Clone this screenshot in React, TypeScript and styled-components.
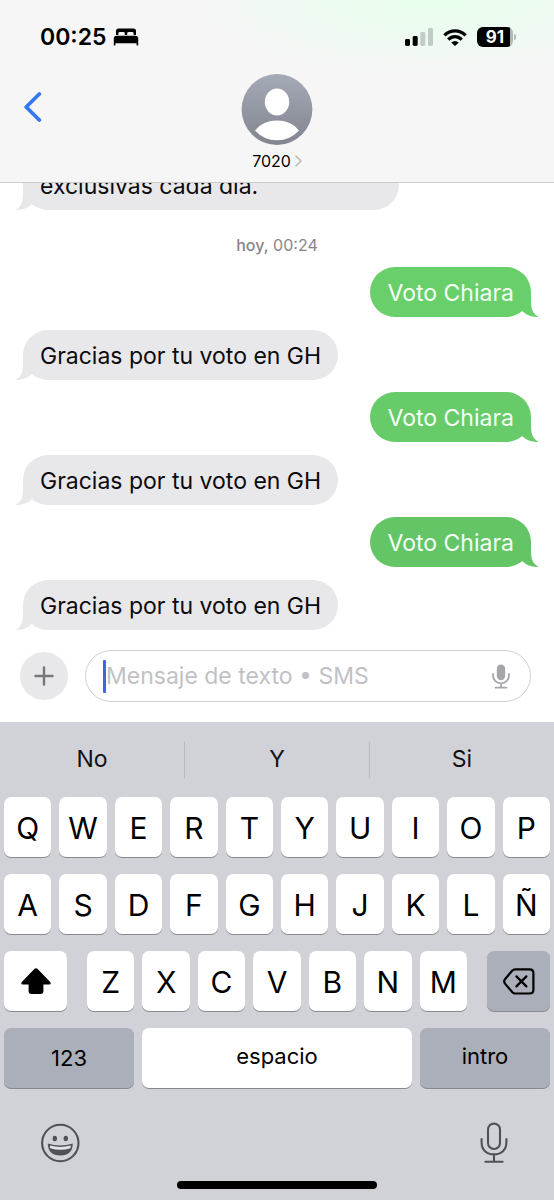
import React from 'react';
import styled, { createGlobalStyle } from 'styled-components';

const GlobalStyle = createGlobalStyle`
  *, *::before, *::after { box-sizing: border-box; }
  html, body { margin: 0; padding: 0; background: #fff; }
  body, button, input { font-family: Inter, "Liberation Sans", sans-serif; }
  button { border: 0; padding: 0; margin: 0; background: none; color: inherit; cursor: pointer; }
  svg { display: block; }
`;

const Screen = styled.div`
  display: flex;
  flex-direction: column;
  height: 100vh;
  min-height: 800px;
  background: #fff;
  color: #0b0b0d;
`;

const Header = styled.header`
  flex: none;
  border-bottom: 1px solid #cbcbcd;
  background:
    radial-gradient(ellipse 240px 74px at 78% 0, #e8feec 0%, #edfbf0 45%, rgba(246, 246, 247, 0) 100%),
    #f6f6f7;
`;

const StatusBar = styled.div`
  display: flex;
  align-items: center;
  justify-content: space-between;
  height: 74px;
  padding: 0 38px 0 40px;
  color: #000;
`;

const StatusGroup = styled.div<{ $gap: number }>`
  display: flex;
  align-items: center;
  gap: ${(p) => p.$gap}px;
`;

const Clock = styled.time`
  font-size: 23px;
  font-weight: 600;
  line-height: 28px;
`;

const Battery = styled.div`
  display: flex;
  align-items: center;
  gap: 1px;
`;

const BatteryBody = styled.span`
  width: 36px;
  height: 20px;
  border-radius: 6px;
  background: linear-gradient(90deg, #000 33px, #b2b8b4 33px);
  color: #fff;
  font-size: 17px;
  font-weight: 700;
  line-height: 20px;
  text-align: center;
`;

const BatteryTip = styled.span`
  width: 2px;
  height: 6px;
  border-radius: 0 2px 2px 0;
  background: #b2b8b4;
`;

const NavBar = styled.nav`
  display: grid;
  grid-template-columns: 1fr auto 1fr;
  height: 108px;
  padding: 0 20px;
`;

const BackButton = styled.button`
  justify-self: start;
  align-self: start;
  padding: 16px 4px;
`;

const Contact = styled.button`
  display: flex;
  flex-direction: column;
  align-items: center;
  justify-content: flex-start;
  gap: 6px;
`;

const ContactName = styled.span`
  display: flex;
  align-items: center;
  gap: 4px;
  font-size: 16px;
  line-height: 20px;
  color: #000;
`;

const Thread = styled.main`
  flex: 1;
  min-height: 0;
  overflow: hidden;
  display: flex;
  flex-direction: column;
  justify-content: flex-end;
  padding: 0 23px 20px;
`;

const Stamp = styled.p`
  flex: none;
  margin: 25px 0 0;
  text-align: center;
  font-size: 16px;
  line-height: 20px;
  color: #85858a;
  b { font-weight: 500; }
`;

const Bubble = styled.div<{ $out?: boolean; $tone: string; $wide?: boolean }>`
  flex: none;
  position: relative;
  align-self: ${(p) => (p.$out ? 'flex-end' : 'flex-start')};
  width: ${(p) => (p.$wide ? '74%' : 'auto')};
  margin-top: ${(p) => (p.$out ? 12 : 13)}px;
  padding: 2px 17px 0;
  border-radius: 25px;
  background: ${(p) => p.$tone};
  color: ${(p) => (p.$out ? '#f6fff6' : '#0b0b0d')};
  font-size: 23px;
  line-height: 48px;
  white-space: nowrap;
`;

const Tail = styled.svg<{ $out?: boolean }>`
  position: absolute;
  bottom: 0;
  ${(p) => (p.$out ? 'right: -8px;' : 'left: -8px; transform: scaleX(-1);')}
`;

const Composer = styled.form`
  flex: none;
  display: flex;
  align-items: center;
  gap: 17px;
  padding: 0 23px 20px 20px;
`;

const AddButton = styled.button`
  display: grid;
  place-items: center;
  width: 48px;
  height: 48px;
  border-radius: 50%;
  background: #e8e8ea;
`;

const Field = styled.div`
  flex: 1;
  display: flex;
  align-items: center;
  height: 52px;
  padding: 0 20px 0 17px;
  border: 1px solid #d2d2d5;
  border-radius: 26px;
`;

const Caret = styled.span`
  width: 3px;
  height: 33px;
  border-radius: 1px;
  background: #4563dc;
`;

const TextInput = styled.input`
  flex: 1;
  min-width: 0;
  height: 32px;
  padding: 0;
  border: 0;
  outline: 0;
  background: transparent;
  font-size: 23px;
  &::placeholder { color: #c1c1c5; opacity: 1; }
`;

const Keyboard = styled.section`
  flex: none;
  background: #d1d2d8;
  color: #000;
`;

const Suggestions = styled.div`
  display: flex;
  align-items: center;
  height: 75px;
`;

const Suggestion = styled.button`
  flex: 1;
  height: 36px;
  padding-bottom: 2px;
  font-size: 23px;
  line-height: 34px;
  color: #111114;
  & + & { border-left: 1px solid #b9bac0; }
`;

const Keys = styled.div`
  display: flex;
  flex-direction: column;
  gap: 17px;
  padding: 0 4px;
`;

const KeyRow = styled.div<{ $gap?: number }>`
  display: flex;
  flex: 1;
  gap: ${(p) => p.$gap ?? 8}px;
`;

const Key = styled.button<{ $width?: number; $dark?: boolean }>`
  display: grid;
  place-items: center;
  flex: ${(p) => (p.$width ? `0 0 ${p.$width}px` : '1 1 0')};
  min-width: 0;
  height: 60px;
  border-radius: 7px;
  background: ${(p) => (p.$dark ? '#abafba' : '#fff')};
  box-shadow: 0 1px 0 #898a8d;
  color: #000;
`;

const LetterKey = styled(Key)`
  padding-top: 2px;
  font-size: 30px;
  line-height: 58px;
`;

const NumberKey = styled(Key)`
  font-size: 22px;
  line-height: 60px;
`;

const WordKey = styled(Key)`
  padding-bottom: 4px;
  font-size: 22px;
  line-height: 56px;
`;

const Dock = styled.div`
  display: flex;
  justify-content: space-between;
  align-items: center;
  height: 93px;
  padding: 17px 46px 0 40px;
`;

const HomeArea = styled.div`
  display: flex;
  justify-content: center;
  padding-bottom: 11px;
`;

const HomeBar = styled.span`
  width: 36%;
  height: 8px;
  border-radius: 4px;
  background: #000;
`;

const BedIcon = () => (
  <svg width="26" height="18" viewBox="0 0 26 18" aria-hidden="true">
    <path d="M3 7V3.2Q3 .6 5.6 .6H20.4Q23 .6 23 3.2V7H20.6V5.4Q20.6 4 19.2 4H15.5Q14.2 4 14.2 5.4V7H11.8V5.4Q11.8 4 10.5 4H6.8Q5.4 4 5.4 5.4V7Z" />
    <path d="M.8 17V10.6Q.8 7.8 3.6 7.8H22.4Q25.2 7.8 25.2 10.6V17Q25.2 17.6 24.4 17.6T23.6 17V15.2H2.4V17Q2.4 17.6 1.6 17.6T.8 17Z" />
  </svg>
);

const SignalIcon = () => (
  <svg width="28" height="18" viewBox="0 0 28 18" aria-hidden="true">
    <rect x="0" y="11" width="5" height="7" rx="1.4" />
    <rect x="7.7" y="8" width="5" height="10" rx="1.4" />
    <rect x="15.3" y="4" width="5" height="14" rx="1.4" fill="#c1cdc4" />
    <rect x="23" y="0" width="5" height="18" rx="1.4" fill="#c1cdc4" />
  </svg>
);

const WifiIcon = () => (
  <svg width="24" height="17" viewBox="0 0 24 17" aria-hidden="true">
    <path d="M1.4 6.4Q6 1.9 12 1.9T22.6 6.4" fill="none" stroke="#000" strokeWidth="3.4" />
    <path d="M5.2 10.6Q8.2 7.6 12 7.6T18.8 10.6" fill="none" stroke="#000" strokeWidth="3.2" />
    <path d="M8.2 13.4Q12 10.4 15.8 13.4L12 17Z" />
  </svg>
);

const BackIcon = () => (
  <svg width="18" height="32" viewBox="0 0 18 32" fill="none" stroke="#3478f0" strokeWidth="3.8" strokeLinecap="round" strokeLinejoin="round" aria-hidden="true">
    <path d="M15.3 4 2.2 17 15.3 30" />
  </svg>
);

const Avatar = () => (
  <svg width="72" height="71" viewBox="0 0 72 71" aria-hidden="true">
    <defs>
      <linearGradient id="avatar" x1="0" y1="0" x2="0" y2="1">
        <stop offset="0" stopColor="#a5aab7" />
        <stop offset="1" stopColor="#82858f" />
      </linearGradient>
    </defs>
    <circle cx="36" cy="35.5" r="35.4" fill="url(#avatar)" />
    <ellipse cx="36" cy="28" rx="12.2" ry="13.4" fill="#fff" />
    <path d="M14 56.4Q22 46.6 36 46.6T58 56.4Q49 66.2 36 66.2T14 56.4Z" fill="#fff" />
  </svg>
);

const DisclosureIcon = () => (
  <svg width="7" height="12" viewBox="0 0 7 12" fill="none" stroke="#bcbcc0" strokeWidth="1.6" strokeLinecap="round" strokeLinejoin="round" aria-hidden="true">
    <path d="M1 1.2 6 6 1 10.8" />
  </svg>
);

const PlusIcon = () => (
  <svg width="20" height="20" viewBox="0 0 20 20" fill="none" stroke="#77777b" strokeWidth="2.4" strokeLinecap="round" aria-hidden="true">
    <path d="M10 1.5V18.5M1.5 10H18.5" />
  </svg>
);

const FieldMicIcon = () => (
  <svg width="18" height="25" viewBox="0 0 18 25" fill="none" stroke="#a5a6ac" strokeWidth="1.8" strokeLinecap="round" aria-hidden="true">
    <rect x="4.8" y=".6" width="8.4" height="15.6" rx="4.2" fill="#a5a6ac" stroke="none" />
    <path d="M1.1 9.8V12A7.9 7.3 0 0 0 16.9 12V9.8M9 19.4V23.6M3.6 23.7H14.4" />
  </svg>
);

const ShiftIcon = () => (
  <svg width="30" height="26" viewBox="0 0 30 26" aria-hidden="true">
    <path d="M13.6 .8Q15 -.4 16.4 .8L29.2 14Q30.6 16.4 28.2 16.4H22.4V23.6Q22.4 26 20 26H10Q7.6 26 7.6 23.6V16.4H1.8Q-.6 16.4 .8 14Z" />
  </svg>
);

const DeleteIcon = () => (
  <svg width="32" height="27" viewBox="0 0 32 27" fill="none" stroke="#000" strokeWidth="2.2" strokeLinecap="round" strokeLinejoin="round" aria-hidden="true">
    <path d="M12.2 1.3H26.6Q30.4 1.3 30.4 5.1V21.7Q30.4 25.5 26.6 25.5H12.2Q10.6 25.5 9.4 24.3L2 15.6Q.4 13.4 2 11.2L9.4 2.5Q10.6 1.3 12.2 1.3Z" />
    <path d="M13.4 8.4 23.4 18.4M23.4 8.4 13.4 18.4" />
  </svg>
);

const EmojiIcon = () => (
  <svg width="40" height="40" viewBox="0 0 40 40" aria-hidden="true">
    <circle cx="20.3" cy="20" r="18.2" fill="none" stroke="#505157" strokeWidth="2.1" />
    <ellipse cx="14.8" cy="15.5" rx="2.2" ry="2.7" fill="#505157" />
    <ellipse cx="25.8" cy="15.5" rx="2.2" ry="2.7" fill="#505157" />
    <path d="M7.8 20.6Q20.3 24.6 32.8 20.6 32.6 32.6 20.3 32.6T7.8 20.6Z" fill="#505157" />
    <path d="M9.8 22.6Q20.3 25.4 30.8 22.6L30.4 25.2Q20.3 28.4 10.2 25.2Z" fill="#e4e5e9" />
  </svg>
);

const DictationIcon = () => (
  <svg width="28" height="42" viewBox="0 0 28 42" fill="none" stroke="#505157" strokeWidth="2.1" strokeLinecap="round" aria-hidden="true">
    <rect x="8" y="1.6" width="12" height="25.4" rx="6" />
    <path d="M1.6 17V20.6C1.6 28 6.6 32.4 14 32.4S26.4 28 26.4 20.6V17M14 32.6V39.6M5.4 39.8H22.6" />
  </svg>
);

const BubbleTail = ({ out, tone }: { out?: boolean; tone: string }) => (
  <Tail $out={out} width="26" height="26" viewBox="0 0 26 26" aria-hidden="true">
    <path d="M18 0V12Q18.2 22.4 25.6 25.8 16.2 26.6 9.6 20.6L4 14V0Z" fill={tone} />
  </Tail>
);

const GREY = '#e8e8eb';

const messages = [
  { text: 'Voto Chiara', out: true, tone: '#69cf6b' },
  { text: 'Gracias por tu voto en GH', out: false, tone: GREY },
  { text: 'Voto Chiara', out: true, tone: '#67cb69' },
  { text: 'Gracias por tu voto en GH', out: false, tone: GREY },
  { text: 'Voto Chiara', out: true, tone: '#64c566' },
  { text: 'Gracias por tu voto en GH', out: false, tone: GREY },
];

const letters = (row: string) => row.split('').map((c) => <LetterKey type="button" key={c}>{c}</LetterKey>);

export default function App() {
  return (
    <>
      <GlobalStyle />
      <Screen>
        <Header>
          <StatusBar>
            <StatusGroup $gap={7}>
              <Clock>00:25</Clock>
              <BedIcon />
            </StatusGroup>
            <StatusGroup $gap={10}>
              <SignalIcon />
              <WifiIcon />
              <Battery>
                <BatteryBody>91</BatteryBody>
                <BatteryTip />
              </Battery>
            </StatusGroup>
          </StatusBar>
          <NavBar>
            <BackButton type="button" aria-label="Atrás"><BackIcon /></BackButton>
            <Contact type="button">
              <Avatar />
              <ContactName>7020 <DisclosureIcon /></ContactName>
            </Contact>
          </NavBar>
        </Header>

        <Thread>
          <Bubble $tone={GREY} $wide>
            exclusivas cada día.
            <BubbleTail tone={GREY} />
          </Bubble>
          <Stamp><b>hoy,</b> 00:24</Stamp>
          {messages.map((m, i) => (
            <Bubble key={i} $out={m.out} $tone={m.tone}>
              {m.text}
              <BubbleTail out={m.out} tone={m.tone} />
            </Bubble>
          ))}
        </Thread>

        <Composer onSubmit={(e) => e.preventDefault()}>
          <AddButton type="button" aria-label="Añadir"><PlusIcon /></AddButton>
          <Field>
            <Caret />
            <TextInput type="text" aria-label="Mensaje" placeholder="Mensaje de texto • SMS" />
            <button type="button" aria-label="Grabar audio"><FieldMicIcon /></button>
          </Field>
        </Composer>

        <Keyboard>
          <Suggestions>
            <Suggestion type="button">No</Suggestion>
            <Suggestion type="button">Y</Suggestion>
            <Suggestion type="button">Si</Suggestion>
          </Suggestions>
          <Keys>
            <KeyRow>{letters('QWERTYUIOP')}</KeyRow>
            <KeyRow>{letters('ASDFGHJKLÑ')}</KeyRow>
            <KeyRow $gap={20}>
              <Key type="button" $width={63} aria-label="Mayúsculas"><ShiftIcon /></Key>
              <KeyRow>{letters('ZXCVBNM')}</KeyRow>
              <Key type="button" $width={63} $dark aria-label="Borrar"><DeleteIcon /></Key>
            </KeyRow>
            <KeyRow>
              <NumberKey type="button" $width={130} $dark>123</NumberKey>
              <WordKey type="button">espacio</WordKey>
              <WordKey type="button" $width={130} $dark>intro</WordKey>
            </KeyRow>
          </Keys>
          <Dock>
            <button type="button" aria-label="Emojis"><EmojiIcon /></button>
            <button type="button" aria-label="Dictado"><DictationIcon /></button>
          </Dock>
          <HomeArea><HomeBar /></HomeArea>
        </Keyboard>
      </Screen>
    </>
  );
}
